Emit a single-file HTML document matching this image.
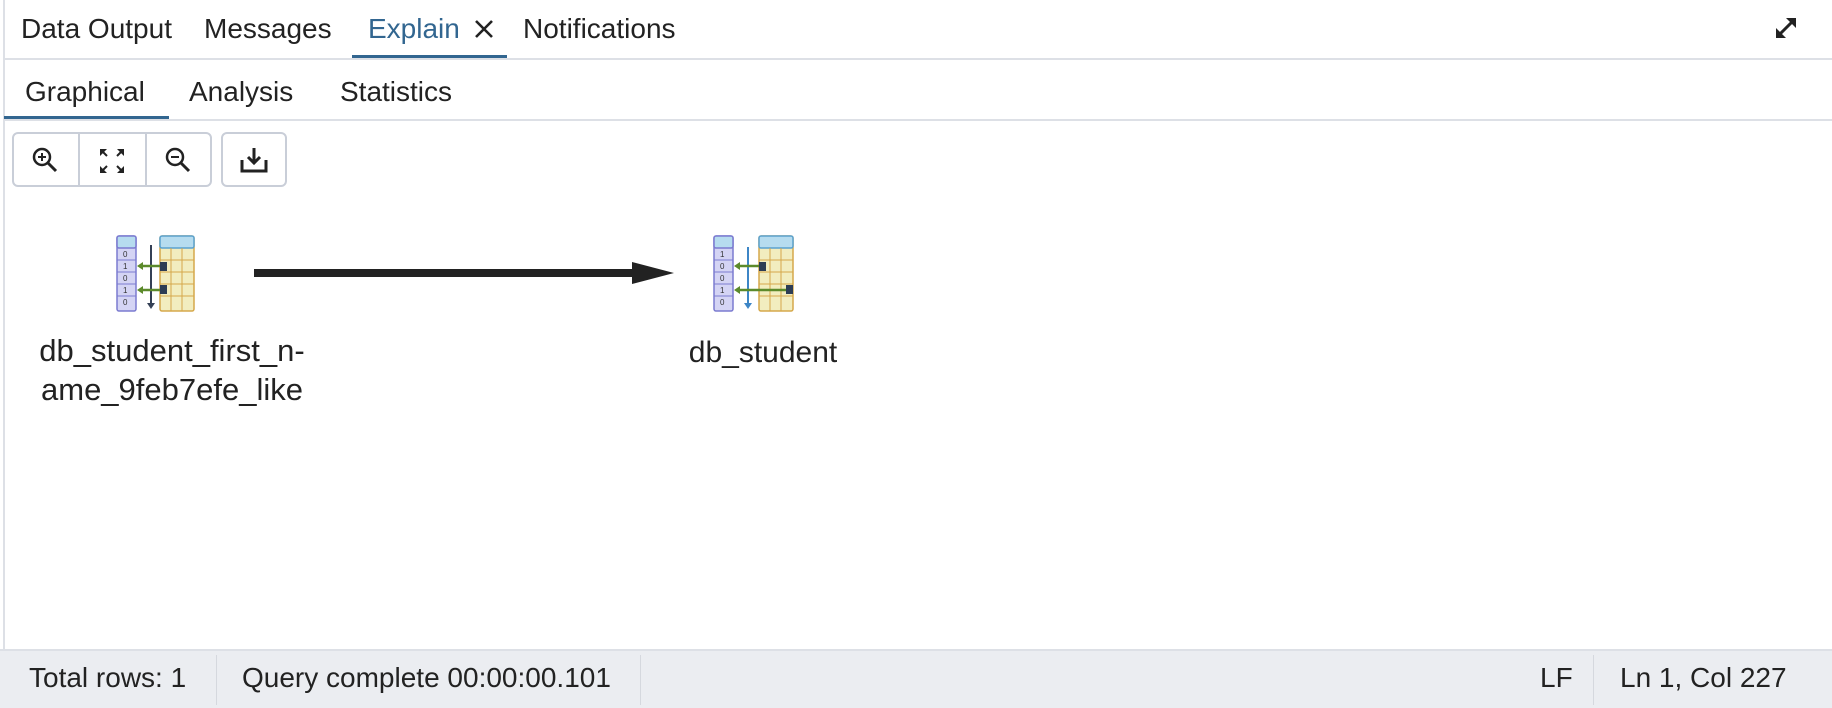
<!DOCTYPE html>
<html><head><meta charset="utf-8"><style>
*{margin:0;padding:0;box-sizing:border-box}
body{width:1832px;height:708px;background:#fff;font-family:"Liberation Sans",sans-serif;color:#222;position:relative;overflow:hidden}
.a{position:absolute;white-space:nowrap}
.t{font-size:28px;top:12px;line-height:34px}
.s{font-size:28px;top:75px;line-height:34px}
.st{font-size:28px;top:661px;color:#222;line-height:34px}
</style></head><body>
<div class="a" style="left:3px;top:0;width:2px;height:651px;background:#dde0e6"></div>
<div class="a t" style="left:21px">Data Output</div>
<div class="a t" style="left:204px">Messages</div>
<div class="a t" style="left:368px;color:#326690">Explain</div>
<svg class="a" style="left:473px;top:18px" width="22" height="22" viewBox="0 0 22 22"><path d="M3 3L19 19M19 3L3 19" stroke="#222" stroke-width="2.6"/></svg>
<div class="a t" style="left:523px">Notifications</div>
<svg class="a" style="left:1772px;top:14px" width="28" height="28" viewBox="0 0 28 28"><path d="M5 23L23 5" stroke="#222" stroke-width="3"/><path d="M14 4H24V14Z M4 14V24H14Z" fill="#222"/></svg>
<div class="a" style="left:352px;top:55px;width:155px;height:3px;background:#326690"></div>
<div class="a" style="left:5px;top:58px;width:1827px;height:2px;background:#dde0e6"></div>
<div class="a s" style="left:25px">Graphical</div>
<div class="a s" style="left:189px">Analysis</div>
<div class="a s" style="left:340px">Statistics</div>
<div class="a" style="left:4px;top:116px;width:165px;height:3px;background:#326690"></div>
<div class="a" style="left:5px;top:119px;width:1827px;height:2px;background:#dde0e6"></div>
<div class="a" style="left:12px;top:132px;width:200px;height:55px;border:2px solid #c9ced8;border-radius:6px"></div>
<div class="a" style="left:78px;top:133px;width:2px;height:53px;background:#c9ced8"></div>
<div class="a" style="left:145px;top:133px;width:2px;height:53px;background:#c9ced8"></div>
<div class="a" style="left:221px;top:132px;width:66px;height:55px;border:2px solid #c9ced8;border-radius:6px"></div>
<svg class="a" style="left:30px;top:145px" width="30" height="30" viewBox="0 0 30 30"><circle cx="12" cy="12" r="8" fill="none" stroke="#222" stroke-width="2.5"/><path d="M18 18L26 26" stroke="#222" stroke-width="3"/><path d="M8 12H16M12 8V16" stroke="#222" stroke-width="2"/></svg>
<svg class="a" style="left:97px;top:146px" width="30" height="30" viewBox="0 0 30 30"><path d="M3 3H10L3 10Z M27 3V10L20 3Z M3 27V20L10 27Z M27 27H20L27 20Z" fill="#222"/><path d="M4 4L10 10M26 4L20 10M4 26L10 20M26 26L20 20" stroke="#222" stroke-width="2"/></svg>
<svg class="a" style="left:163px;top:145px" width="30" height="30" viewBox="0 0 30 30"><circle cx="12" cy="12" r="8" fill="none" stroke="#222" stroke-width="2.5"/><path d="M18 18L26 26" stroke="#222" stroke-width="3"/><path d="M8 12H16" stroke="#222" stroke-width="2"/></svg>
<svg class="a" style="left:238px;top:144px" width="32" height="32" viewBox="0 0 32 32"><path d="M4 16V27H28V16" fill="none" stroke="#222" stroke-width="3"/><path d="M16 4V19M10 13L16 19L22 13" fill="none" stroke="#222" stroke-width="3"/></svg>

<svg class="a" style="left:254px;top:262px" width="422" height="22" viewBox="0 0 422 22"><rect x="0" y="7" width="380" height="8" fill="#222"/><path d="M378 0L420 11L378 22Z" fill="#222"/></svg>

<svg class="a" style="left:116px;top:235px" width="80" height="78" viewBox="0 0 80 78">
<rect x="1" y="1" width="19" height="75" rx="2" fill="#d4d4f4" stroke="#7b7bd0" stroke-width="1.5"/><rect x="1" y="1" width="19" height="12" rx="2" fill="#b6dcef" stroke="#7b7bd0" stroke-width="1.5"/>
<path d="M1 25H20M1 37H20M1 49H20M1 61H20" stroke="#7b7bd0"/>
<g font-size="8" font-family="Liberation Sans" fill="#333"><text x="7" y="22">0</text><text x="7" y="34">1</text><text x="7" y="46">0</text><text x="7" y="58">1</text><text x="7" y="70">0</text></g>
<rect x="44" y="1" width="34" height="75" rx="2" fill="#f2edbf" stroke="#d5a84b" stroke-width="1.5"/><rect x="44" y="1" width="34" height="12" rx="2" fill="#b6dcef" stroke="#5aa2cf" stroke-width="1.5"/>
<path d="M44 25H78M44 37H78M44 49H78M44 61H78M55 13V76M66 13V76" stroke="#d5a84b"/>
<path d="M35 10V70" stroke="#344055" stroke-width="2"/><path d="M31 68L35 74L39 68Z" fill="#344055"/>
<path d="M24 31H47M24 55H47" stroke="#5c8a2b" stroke-width="2.5"/><path d="M21 31L27 27V35Z M21 55L27 51V59Z" fill="#5c8a2b"/>
<rect x="44" y="27" width="7" height="9" fill="#2d3d55"/><rect x="44" y="50" width="7" height="9" fill="#2d3d55"/></svg>

<svg class="a" style="left:713px;top:235px" width="82" height="78" viewBox="0 0 82 78">
<rect x="1" y="1" width="19" height="75" rx="2" fill="#d4d4f4" stroke="#7b7bd0" stroke-width="1.5"/><rect x="1" y="1" width="19" height="12" rx="2" fill="#b6dcef" stroke="#7b7bd0" stroke-width="1.5"/>
<path d="M1 25H20M1 37H20M1 49H20M1 61H20" stroke="#7b7bd0"/>
<g font-size="8" font-family="Liberation Sans" fill="#333"><text x="7" y="22">1</text><text x="7" y="34">0</text><text x="7" y="46">0</text><text x="7" y="58">1</text><text x="7" y="70">0</text></g>
<rect x="46" y="1" width="34" height="75" rx="2" fill="#f2edbf" stroke="#d5a84b" stroke-width="1.5"/><rect x="46" y="1" width="34" height="12" rx="2" fill="#b6dcef" stroke="#5aa2cf" stroke-width="1.5"/>
<path d="M46 25H80M46 37H80M46 49H80M46 61H80M57 13V76M68 13V76" stroke="#d5a84b"/>
<path d="M35 12V70" stroke="#3d86c6" stroke-width="2"/><path d="M31 68L35 74L39 68Z" fill="#3d86c6"/>
<path d="M24 31H49M24 55H75" stroke="#5c8a2b" stroke-width="2.5"/><path d="M21 31L27 27V35Z M21 55L27 51V59Z" fill="#5c8a2b"/>
<rect x="46" y="27" width="7" height="9" fill="#2d3d55"/><rect x="73" y="50" width="7" height="9" fill="#2d3d55"/></svg>

<div class="a" style="left:0px;top:331px;width:344px;text-align:center;font-size:31px;line-height:39px">db_student_first_n-<br>ame_9feb7efe_like</div>
<div class="a" style="left:613px;top:334px;width:300px;text-align:center;font-size:30px;line-height:38px">db_student</div>

<div class="a" style="left:0;top:649px;width:1832px;height:2px;background:#dde0e6"></div>
<div class="a" style="left:0;top:651px;width:1832px;height:57px;background:#ebedf1"></div>
<div class="a" style="left:216px;top:655px;width:1px;height:50px;background:#d5d8de"></div>
<div class="a" style="left:640px;top:655px;width:1px;height:50px;background:#d5d8de"></div>
<div class="a" style="left:1593px;top:655px;width:1px;height:50px;background:#d5d8de"></div>
<div class="a st" style="left:29px">Total rows: 1</div>
<div class="a st" style="left:242px">Query complete 00:00:00.101</div>
<div class="a st" style="left:1540px">LF</div>
<div class="a st" style="left:1620px">Ln 1, Col 227</div>
</body></html>
